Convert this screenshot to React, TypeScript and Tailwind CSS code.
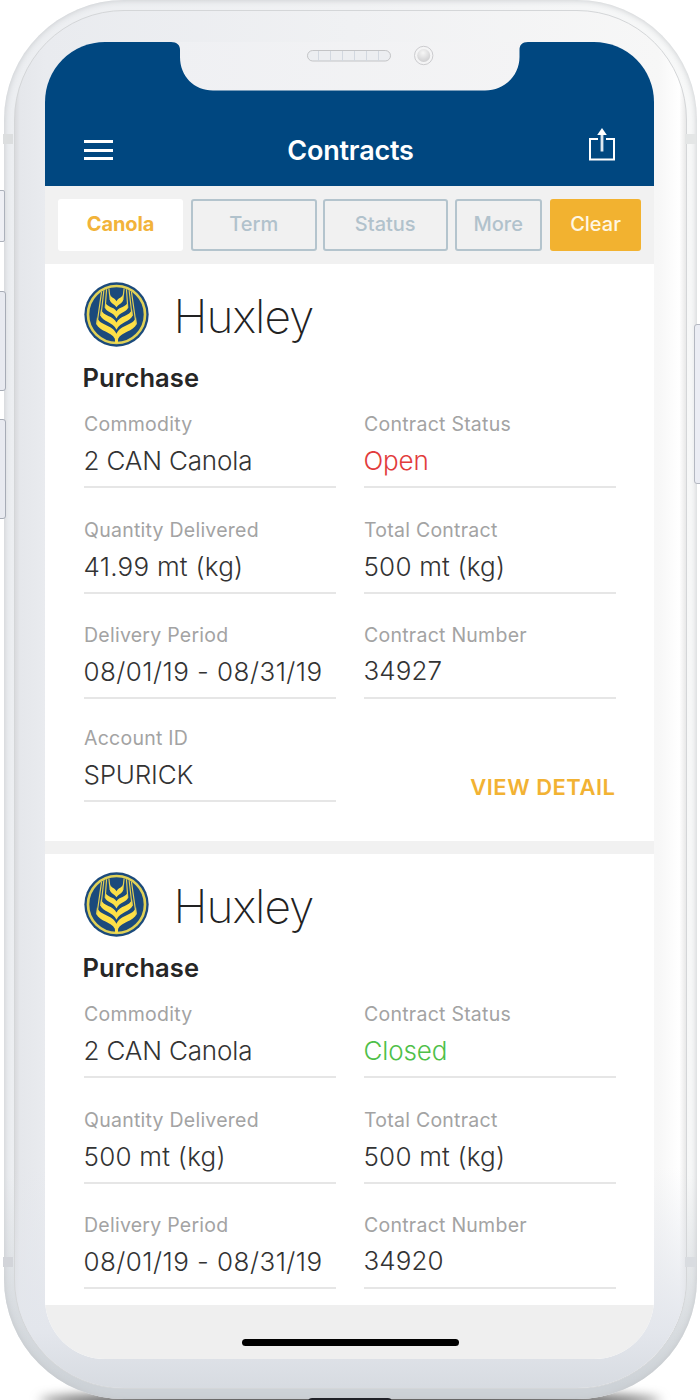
import React from "react";

type FieldProps = {
  label: string;
  value: string;
  tone?: string;
  valueClass?: string;
};

type Contract = {
  status: string;
  statusTone: string;
  delivered: string;
  number: string;
  account?: string;
};

const contracts: Contract[] = [
  { status: "Open", statusTone: "text-[#e23b3b]", delivered: "41.99 mt (kg)", number: "34927", account: "SPURICK" },
  { status: "Closed", statusTone: "text-[#4fbf49]", delivered: "500 mt (kg)", number: "34920" },
];

function WheatLogo() {
  return (
    <svg viewBox="0 0 196 196" className="mb-[2px] h-[65px] w-[65px] shrink-0">
      <circle cx="98" cy="98" r="97" fill="#1b4a7c" />
      <circle cx="98" cy="98" r="86" fill="none" stroke="#e0d157" strokeWidth="8" />
      <g fill="#fde047">
        <path d="M79 38 C80 47 92 48 98 58 C104 48 116 47 117 38 L118 54 C116 64 104 66 98 76 C92 66 80 64 78 54 Z" />
        <path d="M64 60 C68 76 90 74 98 88 C106 74 128 76 132 60 L133 78 C128 92 106 92 98 110 C90 92 68 92 63 78 Z" />
        <path d="M51 82 C58 104 88 100 98 122 C108 100 138 104 145 82 L147 101 C139 120 109 120 98 144 C87 120 57 120 49 101 Z" />
        <path d="M39 106 C48 132 86 128 98 156 C110 128 148 132 157 106 L159 127 C148 150 114 150 103 171 L102 184 H94 L93 171 C82 150 48 150 37 127 Z" />
      </g>
      <g fill="none" stroke="#e6d152" strokeWidth="3.500">
        <path d="M39 128 L53 29 M51 102 L60 25 M64 78 L68 22 M79 54 L75 20" />
        <path d="M157 128 L143 29 M145 102 L136 25 M132 78 L128 22 M117 54 L121 20" />
      </g>
    </svg>
  );
}

function Field({ label, value, tone = "text-[#333333]", valueClass = "tracking-[-0.15px]" }: FieldProps) {
  return (
    <div className="h-[79px] border-b-2 border-[#e6e6e6]">
      <div className="h-[31px] whitespace-nowrap pl-[0.5px] text-[19.5px] leading-[31px] tracking-[0.25px] text-[#a3a3a3]">{label}</div>
      <div className={`h-[42px] whitespace-nowrap text-[26px] font-light leading-[41px] ${tone} ${valueClass}`}>{value}</div>
    </div>
  );
}

function ContractCard({ contract }: { contract: Contract }) {
  return (
    <article className="h-[590px] shrink-0 border-b-[13px] border-[#f1f1f1] bg-white pl-[38.5px] pt-[17px]">
      <div className="flex h-[68px] items-center">
        <WheatLogo />
        <h2 className="ml-[25px] pt-[2px] text-[46px] font-extralight leading-[68px] tracking-[-1px] text-[#222222]">Huxley</h2>
      </div>
      <h3 className="-ml-px mt-[9px] h-[40px] text-[25.5px] font-semibold leading-[40px] tracking-[0.1px] text-[#262626]">Purchase</h3>
      <div className="mt-[11px] grid grid-cols-[252px_252px] gap-x-[28px] gap-y-[26.7px]">
        <Field label="Commodity" value="2 CAN Canola" />
        <Field label="Contract Status" value={contract.status} tone={contract.statusTone} />
        <Field label="Quantity Delivered" value={contract.delivered} valueClass="tracking-[0.25px]" />
        <Field label="Total Contract" value="500 mt (kg)" valueClass="tracking-[0.2px]" />
        <Field label="Delivery Period" value="08/01/19 - 08/31/19" valueClass="tracking-[0.45px]" />
        <Field label="Contract Number" value={contract.number} valueClass="-mt-px tracking-[0.1px]" />
      </div>
      {contract.account && (
        <div className="mt-[24px] grid grid-cols-[252px_252px] gap-x-[28px]">
          <Field label="Account ID" value={contract.account} valueClass="tracking-[-0.2px]" />
          <button className="mt-[48px] h-[32px] whitespace-nowrap text-right text-[22px] font-semibold leading-[32px] tracking-[0.5px] text-[#f2b233]">
            VIEW DETAIL
          </button>
        </div>
      )}
    </article>
  );
}

function AppHeader() {
  return (
    <header className="flex h-[144px] shrink-0 items-end justify-between bg-[#004780] pl-[39px] pr-[38px]">
      <div className="mb-[26px] flex h-[20px] w-[29px] flex-col justify-between">
        <span className="h-[3px] bg-white" />
        <span className="h-[3px] bg-white" />
        <span className="h-[3px] bg-white" />
      </div>
      <h1 className="mb-[15px] text-[27px] font-semibold leading-[40px] tracking-[-0.2px] text-white">Contracts</h1>
      <svg viewBox="0 0 28 34" className="mb-[25px] h-[34px] w-[28px]" fill="none" stroke="white">
        <path d="M10 12 H2 V32.500 H26 V12 H18" strokeWidth="2" />
        <path d="M14 5 V24.500" strokeWidth="2.800" stroke="#dfe8ef" />
        <path d="M14 1 L18.800 8 H9.200 Z" fill="white" stroke="none" />
      </svg>
    </header>
  );
}

function FilterBar() {
  const outlined = "h-[52px] rounded-[3px] border-2 border-[#b4c4cd] pb-[2px] text-[#b1c2cc]";
  return (
    <nav className="flex h-[78px] shrink-0 bg-[#f1f1f1] pl-[13px] pt-[13px] text-[20px] font-medium">
      <button className="h-[52px] w-[125px] rounded-[3px] bg-white pb-[2px] font-bold tracking-[-0.15px] text-[#f2b33a]">Canola</button>
      <button className={`${outlined} ml-[8px] w-[125.5px]`}>Term</button>
      <button className={`${outlined} ml-[6px] w-[125.5px]`}>Status</button>
      <button className={`${outlined} ml-[6.5px] w-[87.5px]`}>More</button>
      <button className="ml-[8px] h-[52px] w-[91px] rounded-[3px] bg-[#f2b230] pb-[2px] text-[#fff7e4]">Clear</button>
    </nav>
  );
}

function Notch() {
  return (
    <svg viewBox="0 0 358 50" className="absolute left-[126px] top-[-1px] h-[50px] w-[358px]">
      <defs>
        <linearGradient id="notchFill" x1="0" x2="1">
          <stop offset="0" stopColor="#eff0f3" />
          <stop offset="1" stopColor="#f4f4f5" />
        </linearGradient>
        <radialGradient id="lens" cx="0.45" cy="0.3" r="0.7">
          <stop offset="0" stopColor="#f6f6f6" />
          <stop offset="1" stopColor="#cfcfd1" />
        </radialGradient>
      </defs>
      <path d="M0 0 V1 C6 1 9 4 9 9 V16 C9 35 23 49.500 42 49.500 H314 C333 49.500 348.500 35 348.500 16 V9 C348.500 4 351 1 357 1 V0 Z" fill="url(#notchFill)" />
      <rect x="136.500" y="9.500" width="83" height="10.500" rx="5.250" fill="#eceef1" stroke="#c3c4c6" />
      <path d="M147.500 10 V20 M159.500 10 V20 M171.500 10 V20 M183.500 10 V20 M195.500 10 V20 M207.500 10 V20" stroke="#d2d8e0" />
      <circle cx="252.700" cy="14.500" r="9.200" fill="#f4f4f5" stroke="#cccccf" />
      <circle cx="252.700" cy="14.500" r="6.500" fill="url(#lens)" />
    </svg>
  );
}

export default function App() {
  return (
    <div
      className="relative h-[1400px] w-[700px] overflow-hidden bg-white text-[#333333]"
      style={{ fontFamily: 'Inter, "Liberation Sans", sans-serif' }}
    >
      <div className="absolute left-[40px] top-[1391px] h-[20px] w-[620px] rounded-[50%] bg-[#555555] blur-[6px]" />
      <div className="relative mx-auto h-[1399px] w-[693px] rounded-[120px] bg-[linear-gradient(90deg,#eceef1,#f1f2f4_50%,#f7f8f8)] p-[10px]">
        <div className="absolute inset-0 rounded-[120px] bg-[linear-gradient(180deg,transparent_84%,#cdd2d7_99%)] shadow-[inset_0_0_6px_#c3c6c9]" />
        <div className="relative h-[1379px] rounded-[110px] border border-[#d4d6d8] bg-[linear-gradient(90deg,#d9dadd_0,#e5e7eb_5px,#e9ebef_30px,#f0f1f3_50%,#f7f7f7_96%,#ffffff_99%,#e8e8e8)] pl-[30.5px] pt-[31px]">
          <div className="absolute inset-0 rounded-[109px] bg-[linear-gradient(180deg,transparent_84%,#e3e6ec_96%,#d7dbe1)]" />
          <main className="relative flex h-[1317px] w-[609px] flex-col overflow-hidden rounded-[60px] bg-white">
            <AppHeader />
            <FilterBar />
            <section className="flex h-[1041px] shrink-0 flex-col overflow-hidden">
              {contracts.map((contract) => (
                <ContractCard key={contract.number} contract={contract} />
              ))}
            </section>
            <footer className="flex h-[54px] shrink-0 justify-center bg-[#efefef] pt-[34px]">
              <div className="ml-px h-[7px] w-[217px] rounded-full bg-black" />
            </footer>
            <Notch />
          </main>
        </div>
      </div>
      <i className="absolute left-[3px] top-[134px] h-[10px] w-[10px] bg-[#dcdedf]" />
      <i className="absolute left-[685px] top-[134px] h-[10px] w-[11px] bg-[#e4e6e6]" />
      <i className="absolute left-[3px] top-[1257px] h-[10px] w-[10px] bg-[#d2d4d9]" />
      <i className="absolute left-[685px] top-[1257px] h-[10px] w-[11px] bg-[#d9dce0]" />
      <i className="absolute left-[-8px] top-[190px] h-[52px] w-[13px] rounded-[2px] border border-[#acb1bb] bg-[#eff0f5]" />
      <i className="absolute left-[-8px] top-[291px] h-[100px] w-[14px] rounded-[3px] border border-[#a7acb6] bg-[#e8eaf0]" />
      <i className="absolute left-[-8px] top-[419px] h-[100px] w-[14px] rounded-[3px] border border-[#a7acb6] bg-[#e8eaf0]" />
      <i className="absolute left-[694px] top-[324px] h-[160px] w-[12px] rounded-[3px] border border-[#b4b8c1] bg-[#ebedf4]" />
      <i className="absolute left-[308px] top-[1398px] h-[8px] w-[84px] rounded-[5px] bg-[#202228]" />
    </div>
  );
}
